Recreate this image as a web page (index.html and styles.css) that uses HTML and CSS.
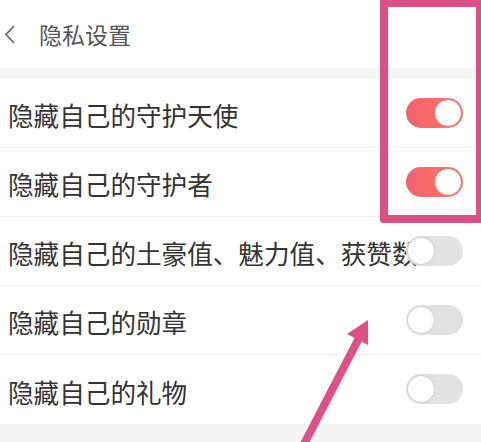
FILE: index.html
```html
<!DOCTYPE html>
<html lang="zh-CN">
<head>
<meta charset="utf-8">
<title>隐私设置</title>
<link rel="stylesheet" href="styles.css">
</head>
<body>
<div class="page">
  <header class="topbar">
    <svg class="back" width="13" height="19" viewBox="0 0 13 19"><path d="M11 1 L3 9.5 L11 18" fill="none" stroke="#666" stroke-width="1.7"/></svg>
    <span class="title">隐私设置</span>
  </header>
  <div class="gap"></div>
  <ul class="list">
    <li class="row"><span class="label">隐藏自己的守护天使</span><span class="switch on"><span class="knob"></span></span></li>
    <li class="row"><span class="label">隐藏自己的守护者</span><span class="switch on"><span class="knob"></span></span></li>
    <li class="row"><span class="label">隐藏自己的土豪值、魅力值、获赞数</span><span class="switch"><span class="knob"></span></span></li>
    <li class="row"><span class="label">隐藏自己的勋章</span><span class="switch"><span class="knob"></span></span></li>
    <li class="row"><span class="label">隐藏自己的礼物</span><span class="switch"><span class="knob"></span></span></li>
  </ul>
  <div class="footer-gap"></div>
  <div class="highlight"></div>
  <svg class="arrow" width="481" height="442" viewBox="0 0 481 442">
    <line x1="303" y1="446" x2="359" y2="338" stroke="#de4f87" stroke-width="8"/>
    <polygon points="368,320 368,345 347,334" fill="#de4f87"/>
  </svg>
</div>
</body>
</html>
```

FILE: styles.css
```css
* { box-sizing: border-box; }
html, body { margin: 0; padding: 0; background: #fff; }
body {
  font-family: "Noto Sans CJK SC", "Noto Sans", sans-serif;
  width: 481px;
  height: 442px;
  overflow: hidden;
}
.page { position: relative; width: 481px; height: 442px; overflow: hidden; }
.topbar {
  height: 68px;
  display: flex;
  align-items: center;
  padding-left: 3px;
  background: #fff;
}
.back { display: block; margin-right: 23px; margin-top: 1px; }
.title { font-size: 23px; color: #555; line-height: 1; }
.gap { height: 11px; background: #f5f5f5; }
.list { list-style: none; margin: 0; padding: 0; }
.row {
  height: 69px;
  display: flex;
  align-items: center;
  padding: 0 18px 0 8px;
  border-bottom: 1px solid #f1f1f1;
}
.row:last-child { height: 69px; border-bottom: none; }
.label {
  flex: 1 1 auto;
  min-width: 0;
  white-space: nowrap;
  font-size: 25.6px;
  color: #333;
  line-height: 1;
  margin-top: 4px;
}
.switch {
  flex: 0 0 57px;
  width: 57px;
  height: 30px;
  border-radius: 15px;
  background: #e2e2e2;
  display: flex;
  align-items: center;
  padding: 1px;
  margin-top: -1px;
}
.switch .knob {
  width: 28px;
  height: 28px;
  border-radius: 50%;
  background: #fff;
  border: 1px solid #d6d6d6;
  box-shadow: 0 0 1px rgba(0,0,0,0.1);
}
.switch.on {
  background: linear-gradient(to right, #f4606b, #fb7c6c);
  justify-content: flex-end;
}
.switch.on .knob { border-color: #e8776f; }
.footer-gap { height: 20px; background: #f5f5f5; }
.highlight {
  position: absolute;
  left: 380px;
  top: -1px;
  width: 104px;
  height: 224px;
  border: 8px solid #de4f87;
  border-radius: 3px;
}
.arrow { position: absolute; left: 0; top: 0; }
```
